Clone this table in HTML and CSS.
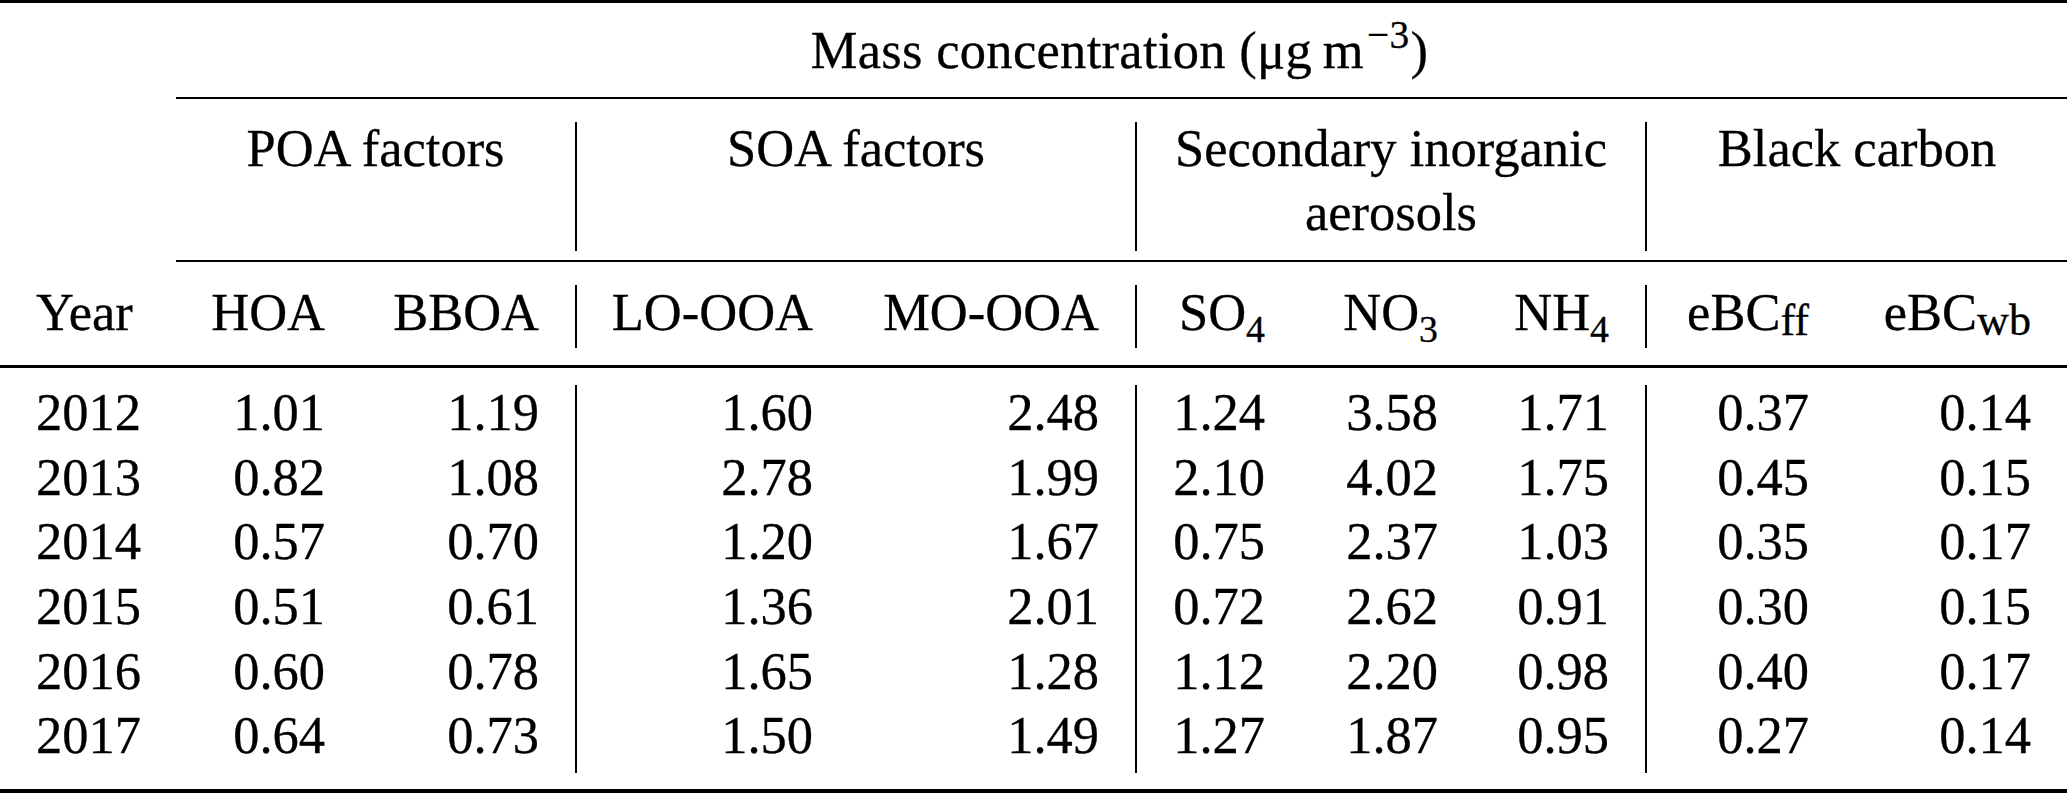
FILE: index.html
```html
<!DOCTYPE html>
<html lang="en">
<head>
<meta charset="utf-8">
<title>Mass concentration by year</title>
<link rel="stylesheet" href="styles.css">
</head>
<body>
<div class="tbl">
  <div class="rule heavy full"></div>

  <div class="stub"></div>
  <div class="cap">Mass concentration (μg&#8201;m<sup>−3</sup>)</div>

  <div class="stub"></div>
  <div class="rule cmid"></div>
  <div class="gap"></div>

  <div class="stub"></div>
  <div class="grp s2">POA factors</div>
  <div class="vl"></div>
  <div class="grp s2">SOA factors</div>
  <div class="vl"></div>
  <div class="grp s3">Secondary inorganic<br>aerosols</div>
  <div class="vl"></div>
  <div class="grp s2">Black carbon</div>

  <div class="gap"></div>
  <div class="stub"></div>
  <div class="rule cmid"></div>
  <div class="gap"></div>

  <div class="c l">Year</div>
  <div class="c">HOA</div>
  <div class="c">BBOA</div>
  <div class="vl"></div>
  <div class="c">LO-OOA</div>
  <div class="c">MO-OOA</div>
  <div class="vl"></div>
  <div class="c">SO<sub class="chem">4</sub></div>
  <div class="c">NO<sub class="chem">3</sub></div>
  <div class="c">NH<sub class="chem">4</sub></div>
  <div class="vl"></div>
  <div class="c">eBC<sub class="txt">ff</sub></div>
  <div class="c">eBC<sub class="txt">wb</sub></div>

  <div class="gap"></div>
  <div class="rule mid full"></div>
  <div class="gap"></div>

  <div class="c l">2012</div><div class="c">1.01</div><div class="c">1.19</div><div class="vl"></div>
  <div class="c">1.60</div><div class="c">2.48</div><div class="vl"></div>
  <div class="c">1.24</div><div class="c">3.58</div><div class="c">1.71</div><div class="vl"></div>
  <div class="c">0.37</div><div class="c">0.14</div>

  <div class="c l">2013</div><div class="c">0.82</div><div class="c">1.08</div><div class="vl"></div>
  <div class="c">2.78</div><div class="c">1.99</div><div class="vl"></div>
  <div class="c">2.10</div><div class="c">4.02</div><div class="c">1.75</div><div class="vl"></div>
  <div class="c">0.45</div><div class="c">0.15</div>

  <div class="c l">2014</div><div class="c">0.57</div><div class="c">0.70</div><div class="vl"></div>
  <div class="c">1.20</div><div class="c">1.67</div><div class="vl"></div>
  <div class="c">0.75</div><div class="c">2.37</div><div class="c">1.03</div><div class="vl"></div>
  <div class="c">0.35</div><div class="c">0.17</div>

  <div class="c l">2015</div><div class="c">0.51</div><div class="c">0.61</div><div class="vl"></div>
  <div class="c">1.36</div><div class="c">2.01</div><div class="vl"></div>
  <div class="c">0.72</div><div class="c">2.62</div><div class="c">0.91</div><div class="vl"></div>
  <div class="c">0.30</div><div class="c">0.15</div>

  <div class="c l">2016</div><div class="c">0.60</div><div class="c">0.78</div><div class="vl"></div>
  <div class="c">1.65</div><div class="c">1.28</div><div class="vl"></div>
  <div class="c">1.12</div><div class="c">2.20</div><div class="c">0.98</div><div class="vl"></div>
  <div class="c">0.40</div><div class="c">0.17</div>

  <div class="c l">2017</div><div class="c">0.64</div><div class="c">0.73</div><div class="vl"></div>
  <div class="c">1.50</div><div class="c">1.49</div><div class="vl"></div>
  <div class="c">1.27</div><div class="c">1.87</div><div class="c">0.95</div><div class="vl"></div>
  <div class="c">0.27</div><div class="c">0.14</div>

  <div class="gap"></div>
  <div class="rule heavy-b full"></div>
</div>
</body>
</html>
```

FILE: styles.css
```css
html, body {
  margin: 0;
  padding: 0;
  background: #fff;
}

body {
  font-family: "Liberation Serif", "Times New Roman", serif;
  font-size: 52.5px;
  color: #000;
  -webkit-text-stroke: 0.3px #000;
}

.tbl {
  display: grid;
  width: 2067px;
  grid-template-columns: 176px 185px 214px 2px 272px 286px 2px 164px 173px 171px 2px 198px 222px;
  grid-template-rows:
    3px 94px 2px 23px 129px 9px 2px 23px 63px 17px 3px 17px
    repeat(6, 64.667px)
    16px 4px;
}

.rule { background: #000; }
.full { grid-column: 1 / -1; }
.cmid { grid-column: 2 / -1; }
.gap { grid-column: 1 / -1; }

.vl { background: #000; }

.cap {
  grid-column: 2 / -1;
  text-align: center;
  line-height: 54.5px;
  padding-top: 20px;
  padding-right: 4px;
  white-space: nowrap;
  letter-spacing: 0.3px;
}

.grp {
  text-align: center;
  line-height: 63.3px;
  margin-top: -4.7px;
  white-space: nowrap;
}
.s2 { grid-column: span 2; }
.s3 { grid-column: span 3; }

.c {
  text-align: right;
  padding-right: 36px;
  line-height: 54.5px;
  white-space: nowrap;
}
.c.l {
  text-align: left;
  padding-right: 0;
  padding-left: 36px;
}

sup, sub {
  line-height: 0;
}
sup {
  font-size: 0.75em;
  vertical-align: 0.5em;
  margin-left: 3px;
  margin-right: 1px;
}
sub.chem {
  font-size: 0.72em;
  vertical-align: -0.31em;
}
sub.txt {
  font-size: 0.84em;
  vertical-align: -0.12em;
}
```
